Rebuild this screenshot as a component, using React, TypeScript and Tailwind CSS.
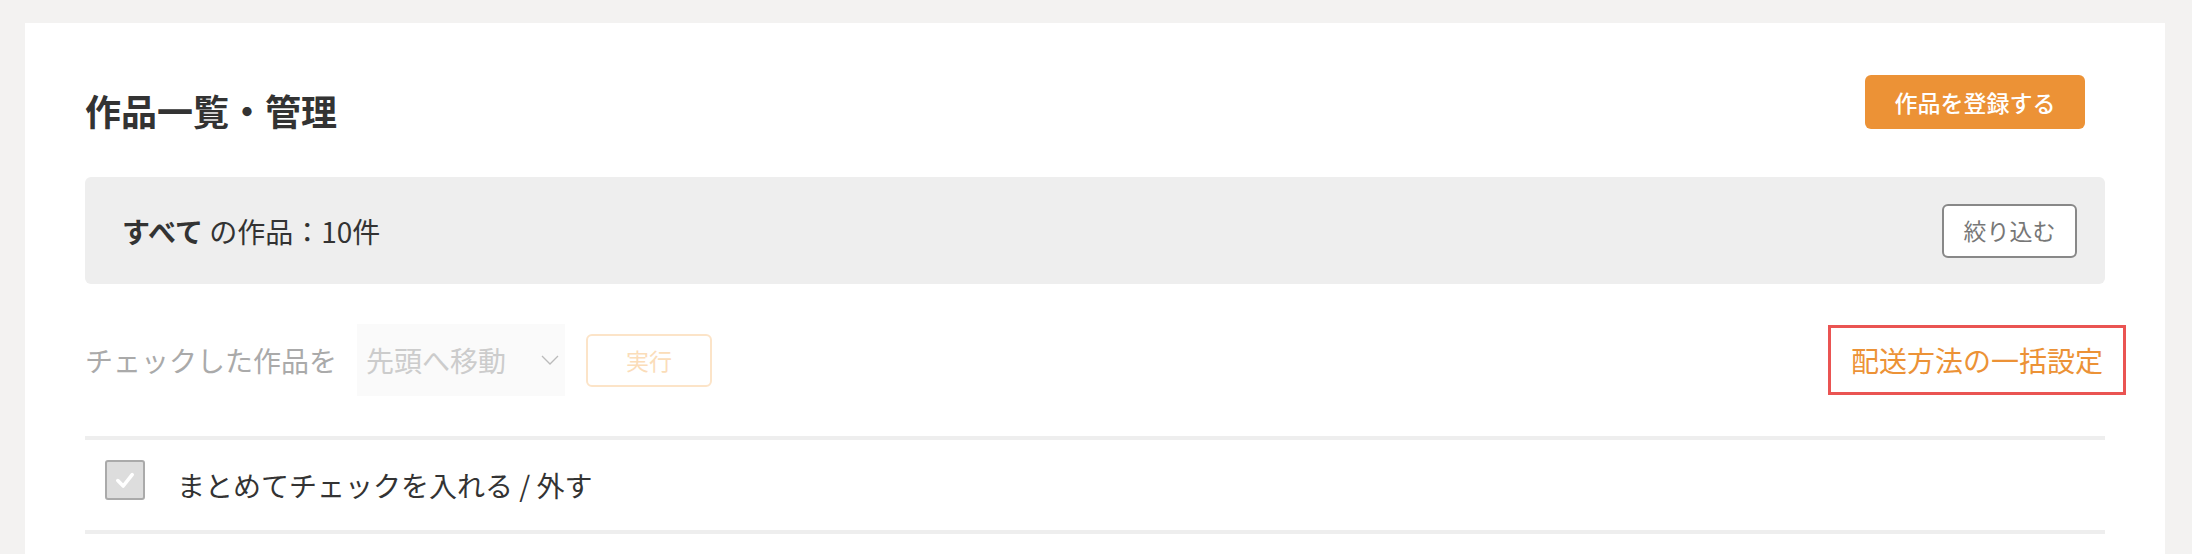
const font = { fontFamily: '"Noto Sans CJK JP", "Noto Sans", sans-serif' };

export default function App() {
  return (
    <div style={font} className="h-[554px] overflow-hidden bg-[#F3F2F1] pt-[23px] pl-[25px] pr-[27px] flex flex-col">
      <div className="flex-1 bg-white pt-[52px] px-[60px]">
        {/* header */}
        <div className="flex items-start justify-between pr-[20px]">
          <h1 className="mt-[8px] text-[36px] leading-[54px] font-bold text-[#333]">作品一覧・管理</h1>
          <button className="w-[220px] h-[54px] rounded-[6px] bg-[#EC9236] text-white text-[23px] font-medium">
            作品を登録する
          </button>
        </div>

        {/* summary */}
        <div className="mt-[40px] h-[107px] rounded-[6px] bg-[#EEEEEE] pl-[37px] pr-[28px] flex items-center justify-between">
          <p className="text-[28px] text-[#333]">
            <span className="font-bold">すべて</span> の作品：10件
          </p>
          <button className="w-[135px] h-[54px] rounded-[6px] border-2 border-[#888] bg-white text-[23px] text-[#777]">
            絞り込む
          </button>
        </div>

        {/* bulk actions */}
        <div className="mt-[40px] h-[72px] flex items-center justify-between">
          <div className="flex items-center">
            <span className="text-[28px] text-[#AAAAAA]">チェックした作品を</span>
            <div className="ml-[20px] w-[208px] h-[72px] bg-[#FAFAFA] pl-[9px] pr-[6px] flex items-center justify-between">
              <span className="text-[28px] text-[#CCCCCC]">先頭へ移動</span>
              <svg viewBox="0 0 18 10" className="w-[18px] h-[10px]">
                <polyline points="1,1 9,9 17,1" fill="none" stroke="#BBBBBB" strokeWidth="1.3" />
              </svg>
            </div>
            <button className="ml-[21px] w-[126px] h-[53px] rounded-[6px] border-2 border-[#FCE4C8] text-[23px] text-[#FBDDB9]">
              実行
            </button>
          </div>
          <a className="-mr-[21px] h-[70px] flex items-center border-[3px] border-[#EA5452] pl-[20px] pr-[20px] text-[28px] text-[#EC9236]">
            配送方法の一括設定
          </a>
        </div>

        {/* check all */}
        <div className="mt-[40px] h-[4px] bg-[#EEEEEE]" />
        <div className="h-[90px] flex items-center pl-[20px]">
          <div className="w-[40px] h-[40px] -mt-[10px] rounded-[3px] border-2 border-[#AAAAAA] bg-[#DDDDDD] flex items-center justify-center">
            <svg viewBox="0 0 20 20" className="w-[24px] h-[24px]">
              <polyline points="4,10.5 8.5,15 16,5.5" fill="none" stroke="white" strokeWidth="3" strokeLinecap="round" strokeLinejoin="round" />
            </svg>
          </div>
          <span className="ml-[32px] text-[28px] text-[#333]">まとめてチェックを入れる / 外す</span>
        </div>
        <div className="h-[4px] bg-[#EEEEEE]" />
      </div>
    </div>
  );
}
